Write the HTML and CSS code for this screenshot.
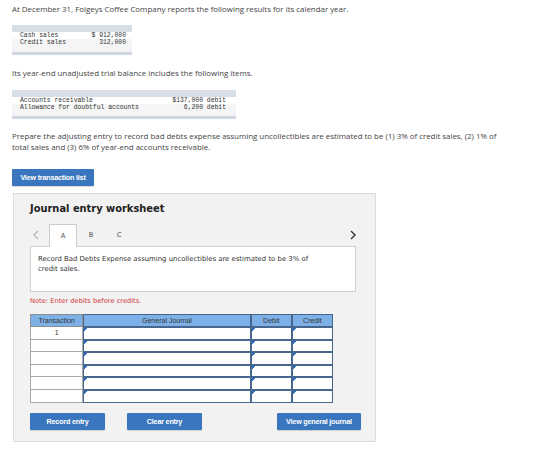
FILE: index.html
```html
<!DOCTYPE html>
<html lang="en">
<head>
    <meta charset="UTF-8">
    <title>Journal entry worksheet</title>
    <link rel="stylesheet" href="styles.css">
</head>
<body>
    <p class="text">At December 31, Folgeys Coffee Company reports the following results for its calendar year.</p>

    <table class="data data-small">
        <thead><tr><td colspan="2"></td></tr></thead>
        <tbody>
            <tr><td>Cash sales</td><td class="amt">$ 912,000</td></tr>
            <tr class="alt"><td>Credit sales</td><td class="amt">312,000</td></tr>
        </tbody>
        <tfoot><tr><td colspan="2"></td></tr></tfoot>
    </table>

    <p class="text gap-1">Its year-end unadjusted trial balance includes the following items.</p>

    <table class="data data-wide">
        <thead><tr><td colspan="2"></td></tr></thead>
        <tbody>
            <tr><td>Accounts receivable</td><td class="amt">$137,000 debit</td></tr>
            <tr class="alt"><td>Allowance for doubtful accounts</td><td class="amt">6,200 debit</td></tr>
        </tbody>
        <tfoot><tr><td colspan="2"></td></tr></tfoot>
    </table>

    <p class="text prompt">Prepare the adjusting entry to record bad debts expense assuming uncollectibles are estimated to be (1) 3% of credit sales, (2) 1% of total sales and (3) 6% of year-end accounts receivable.</p>

    <button class="btn btn-list">View transaction list</button>

    <div class="worksheet">
        <h2>Journal entry worksheet</h2>

        <div class="tabs">
            <span class="arrow arrow-prev">
                <svg width="6" height="10" viewBox="0 0 6 10"><polyline points="5,1 1,5 5,9" fill="none" stroke="#b5b5b5" stroke-width="1.2"/></svg>
            </span>
            <span class="tab active">A</span>
            <span class="tab">B</span>
            <span class="tab">C</span>
            <span class="arrow arrow-next">
                <svg width="6" height="10" viewBox="0 0 6 10"><polyline points="1,1 5,5 1,9" fill="none" stroke="#333" stroke-width="1.4"/></svg>
            </span>
        </div>
        <div class="tab-body">
            Record Bad Debts Expense assuming uncollectibles are estimated to be 3% of credit sales.
        </div>

        <p class="note">Note: Enter debits before credits.</p>

        <table class="journal">
            <thead>
                <tr>
                    <th class="col-tr">Transaction</th>
                    <th class="col-gj">General Journal</th>
                    <th class="col-num">Debit</th>
                    <th class="col-num">Credit</th>
                </tr>
            </thead>
            <tbody>
                <tr><td class="tr">1</td><td class="in"></td><td class="in"></td><td class="in"></td></tr>
                <tr><td class="tr"></td><td class="in"></td><td class="in"></td><td class="in"></td></tr>
                <tr><td class="tr"></td><td class="in"></td><td class="in"></td><td class="in"></td></tr>
                <tr><td class="tr"></td><td class="in"></td><td class="in"></td><td class="in"></td></tr>
                <tr><td class="tr"></td><td class="in"></td><td class="in"></td><td class="in"></td></tr>
                <tr><td class="tr"></td><td class="in"></td><td class="in"></td><td class="in"></td></tr>
            </tbody>
        </table>

        <div class="actions">
            <button class="btn btn-action">Record entry</button>
            <button class="btn btn-action">Clear entry</button>
            <button class="btn btn-journal">View general journal</button>
        </div>
    </div>
</body>
</html>
```

FILE: styles.css
```css
body {
    margin: 0;
    padding: 4px 12px 0;
    background: #fff;
    font-family: "Open Sans", "Liberation Sans", Arial, sans-serif;
    color: #444;
}
.text {
    margin: 0;
    font-size: 7.9px;
    line-height: 11px;
}
.gap-1 { margin-top: 13px; }
.prompt {
    margin-top: 12px;
    width: 502px;
}

/* small data tables */
.data {
    border-collapse: collapse;
    margin-top: 10px;
    font-family: "Liberation Mono", monospace;
    font-size: 6.4px;
    color: #333;
}
.data-small { width: 120px; }
.data-wide { width: 224px; margin-top: 11px; }
.data thead td {
    height: 7px;
    padding: 0;
    background: #d8dee7;
}
.data tbody td {
    padding: 0 0 0 8px;
    height: 7px;
    line-height: 7px;
    white-space: nowrap;
}
.data tbody .alt td { background: #f5f5f5; }
.data tbody tr:last-child td { padding-bottom: 6px; }
.data-wide tbody tr:last-child td { padding-bottom: 5px; }
.data .amt { text-align: right; padding-right: 6px; }
.data-wide .amt { padding-right: 10px; }
.data tfoot td {
    height: 3px;
    padding: 0;
    background: #cfd6e1;
}

/* buttons */
.btn {
    display: block;
    border: none;
    border-radius: 1px;
    background: #3a76bd;
    color: #fff;
    font-family: "Liberation Sans", Arial, sans-serif;
    font-weight: bold;
    font-size: 7.2px;
    letter-spacing: -0.2px;
    height: 17px;
    padding: 0;
    box-shadow: 0 1px 1px rgba(0,0,0,0.15);
}
.btn-list {
    margin-top: 16px;
    width: 82px;
}

/* worksheet panel */
.worksheet {
    margin: 7px 0 0 1px;
    width: 345px;
    height: 247px;
    padding-left: 16px;
    background: #f2f2f2;
    border: 1px solid #dcdcdc;
    font-family: "DejaVu Sans", Verdana, sans-serif;
    color: #333;
    display: flex;
    flex-direction: column;
}
.worksheet h2 {
    margin: 9px 0 0;
    font-size: 9.9px;
    line-height: 12px;
    font-weight: bold;
    color: #222;
}
.tabs {
    margin-top: 9px;
    width: 326px;
    height: 22px;
    display: flex;
    align-items: center;
    font-size: 6.8px;
    color: #555;
}
.arrow { display: flex; align-items: center; }
.arrow-prev { margin-left: 3px; width: 16px; }
.arrow-next { margin-left: auto; }
.tab {
    width: 28px;
    height: 22px;
    display: flex;
    align-items: center;
    justify-content: center;
    box-sizing: border-box;
}
.tab.active {
    background: #fff;
    border: 1px solid #ccc;
    border-bottom: none;
    height: 23px;
    margin-bottom: -1px;
    position: relative;
    z-index: 1;
}
.tab-body {
    width: 326px;
    height: 46px;
    box-sizing: border-box;
    background: #fff;
    border: 1px solid #d0d0d0;
    padding: 7px 36px 0 7px;
    font-size: 6.9px;
    line-height: 10px;
    color: #333;
}
.note {
    margin: 4px 0 0;
    font-size: 6.7px;
    line-height: 10px;
    color: #d2373a;
}

/* journal grid */
.journal {
    margin-top: 8px;
    width: 303px;
    border-collapse: separate;
    border-spacing: 0;
    font-family: "Liberation Sans", Arial, sans-serif;
    font-size: 7px;
    color: #333;
}
.journal th {
    height: 13px;
    padding: 0;
    box-sizing: border-box;
    background: #7db0e7;
    font-weight: normal;
    border: 1px solid #47678f;
}
.journal th.col-tr { width: 53px; border-color: #8e8e8e; }
.journal th.col-gj { width: 167px; }
.journal th.col-num { width: 41px; }
.journal td {
    height: 12.6px;
    padding: 0;
    box-sizing: border-box;
    background: #fff;
}
.journal td.tr {
    text-align: center;
    border: 1px solid #a9a9a9;
    border-top: none;
}
.journal td.in {
    border: 1px solid #48678f;
    background: linear-gradient(135deg, #2e6dc4 2.5px, transparent 2.5px) no-repeat #fff;
}

.actions {
    margin-top: 10px;
    width: 331px;
    display: flex;
}
.btn-action { width: 75px; margin-right: 22px; }
.btn-journal { width: 84px; margin-left: auto; }
```
